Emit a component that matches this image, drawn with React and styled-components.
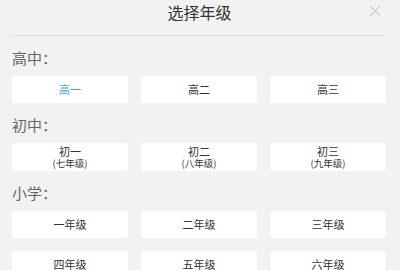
import React from 'react'
import styled, { createGlobalStyle } from 'styled-components'

const GlobalStyle = createGlobalStyle`
    body {
        margin: 0;
        background: #f2f2f2;
        font-family: "Noto Sans CJK SC", "Noto Sans", sans-serif;
    }
`;

const Container = styled.div`
    padding: 0 13px 0 12px;
    width: 400px;
    height: 270px;
    box-sizing: border-box;
    overflow: hidden;
`;

const Header = styled.div`
    position: relative;
    display: flex;
    justify-content: center;
    height: 35px;
    border-bottom: 1px solid #dedede;
`;

const Title = styled.h1`
    margin: 0;
    font-size: 16px;
    line-height: 24px;
    font-weight: 400;
    color: #333;
`;

const Close = styled.span`
    position: absolute;
    right: 6px;
    top: 5px;
    width: 12px;
    height: 12px;
    display: flex;
`;

const Label = styled.div`
    margin: 12px 0 8px;
    font-size: 15px;
    line-height: 20px;
    color: #666;
`;

const Grid = styled.div`
    display: grid;
    grid-template-columns: repeat(3, 116px);
    column-gap: 13px;
    row-gap: 13px;
`;

const GradeButton = styled.div`
    height: ${(props) => (props.$sub ? "28px" : "27px")};
    background: #fff;
    border-radius: 3px;
    display: flex;
    flex-direction: column;
    align-items: center;
    justify-content: center;
    font-size: 11px;
    line-height: 13px;
    color: ${(props) => (props.$active ? "#4aa6ee" : "#333")};
`;

const Sub = styled.span`
    font-size: 9.5px;
    line-height: 11px;
`;

const sections = [
    { name: "高中：", grades: [{ t: "高一", active: true }, { t: "高二" }, { t: "高三" }] },
    {
        name: "初中：",
        grades: [
            { t: "初一", s: "(七年级)" },
            { t: "初二", s: "(八年级)" },
            { t: "初三", s: "(九年级)" },
        ],
    },
    {
        name: "小学：",
        grades: ["一年级", "二年级", "三年级", "四年级", "五年级", "六年级"].map((t) => ({ t })),
    },
];

const App = () => {
  return (
    <Container>
        <GlobalStyle/>
        <Header>
            <Title>选择年级</Title>
            <Close>
                <svg width="12" height="12" viewBox="0 0 12 12">
                    <path d="M1 1L11 11M11 1L1 11" stroke="#cfcfcf" strokeWidth="1.2"/>
                </svg>
            </Close>
        </Header>
        {sections.map((sec) => (
            <div key={sec.name}>
                <Label>{sec.name}</Label>
                <Grid>
                    {sec.grades.map((g) => (
                        <GradeButton key={g.t} $active={g.active} $sub={!!g.s}>
                            <span>{g.t}</span>
                            {g.s && <Sub>{g.s}</Sub>}
                        </GradeButton>
                    ))}
                </Grid>
            </div>
        ))}
    </Container>
  )
}

export default App
